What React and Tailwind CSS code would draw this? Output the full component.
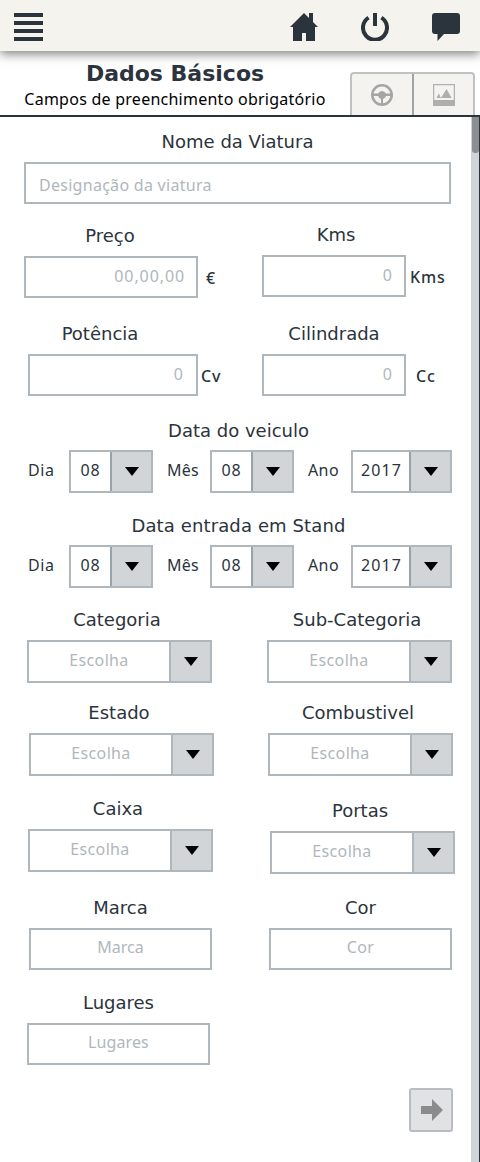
import React from "react";

const verdana = "font-['DejaVu_Sans',Verdana,sans-serif]";
const noto = "font-['Noto_Sans','Open_Sans',sans-serif]";

function Label({ children, className = "" }) {
  return (
    <div className={`${verdana} mb-[6px] h-7 whitespace-nowrap text-center text-[18px] leading-7 text-[#2b343c] ${className}`}>
      {children}
    </div>
  );
}

function Box({ children, className = "" }) {
  return (
    <div className={`${noto} flex h-[42px] items-center whitespace-nowrap border-2 border-[#b0b7bc] text-[16px] text-[#b0b7bc] ${className}`}>
      {children}
    </div>
  );
}

function Unit({ children, className = "" }) {
  return <span className={`${noto} self-end text-[16px] leading-6 font-medium tracking-[0.9px] text-[#2b343c] ${className}`}>{children}</span>;
}

function Arrow({ divider }) {
  return (
    <div className={`flex h-full w-[41px] shrink-0 items-center justify-center border-l-2 bg-[#d1d5d7] ${divider}`}>
      <svg width="14" height="9" viewBox="0 0 14 9" className="block"><path d="M0 0H14L7 9Z" fill="#000" /></svg>
    </div>
  );
}

function Select({ children, className = "", text = "text-[#b0b7bc] tracking-[0.35px]", divider = "border-[#b0b7bc]" }) {
  return (
    <div className={`${noto} flex h-[43px] whitespace-nowrap border-2 border-[#b0b7bc] text-[16px] ${className}`}>
      <span className={`flex flex-1 items-center justify-center pb-[3px] ${text}`}>{children}</span>
      <Arrow divider={divider} />
    </div>
  );
}

function Choice({ label, className = "" }) {
  return (
    <div className={`w-[185px] shrink-0 ${className}`}>
      <Label className="pr-[5px]">{label}</Label>
      <Select>Escolha</Select>
    </div>
  );
}

function DateRow({ label, className = "", tracking = "" }) {
  const small = `${noto} shrink-0 pb-[3px] text-[16px] text-[#2b343c]`;
  const divider = "border-[#99a2a8]";
  return (
    <div className={className}>
      <Label className={`w-[477px] pt-px ${tracking}`}>{label}</Label>
      <div className="flex items-center pl-7">
        <span className={`${small} w-[41px] tracking-[0.6px]`}>Dia</span>
        <Select className="w-[84px]" text="text-[#2b343c] tracking-[0.8px]" divider={divider}>08</Select>
        <span className={`${small} w-[57px] pl-[14px] tracking-[0.2px]`}>Mês</span>
        <Select className="w-[84px]" text="text-[#2b343c] tracking-[0.8px]" divider={divider}>08</Select>
        <span className={`${small} w-[57px] pl-[14px] tracking-[0.4px]`}>Ano</span>
        <Select className="w-[101px]" text="pl-px text-[#2b343c] tracking-[1.1px]" divider={divider}>2017</Select>
      </div>
    </div>
  );
}

export default function App() {
  return (
    <div className="flex h-[1162px] w-[480px] flex-col overflow-hidden bg-white">
      <header className="z-10 flex h-[51px] shrink-0 items-center bg-[#f5f3ed] pl-[14px] shadow-[0_3px_10px_rgba(0,0,0,0.5)]">
        <div className="mt-[3px] flex w-[29px] flex-col gap-1">
          <i className="h-1 bg-[#2b343c]" /><i className="h-1 bg-[#2b343c]" /><i className="h-1 bg-[#2b343c]" /><i className="h-1 bg-[#2b343c]" />
        </div>
        <svg className="mt-[3px] ml-[247px] block" width="28" height="28" viewBox="0 0 28 28" fill="#2b343c">
          <path d="M14 0L19 5V0H23V9L28 14H25V28H16V20H12V28H3V14H0Z" />
        </svg>
        <svg className="mt-[3px] ml-[43px] block" width="28" height="28" viewBox="0 0 28 28" fill="none" stroke="#2b343c" strokeWidth="4">
          <path d="M14 0V13" /><path d="M7.6 4.6A12 12 0 1 0 20.4 4.6" />
        </svg>
        <svg className="mt-[3px] ml-[43px] block" width="28" height="28" viewBox="0 0 28 28" fill="#2b343c">
          <path d="M3 0H25Q28 0 28 3V18Q28 21 25 21H12L5.500 28V21H3Q0 21 0 18V3Q0 0 3 0Z" />
        </svg>
      </header>

      <section className="flex h-[66px] shrink-0 items-end border-b-2 border-[#2b343c]">
        <div className="flex h-full w-[350px] flex-col items-center pt-[9px]">
          <h1 className={`${verdana} h-[27px] text-[22px] leading-7 font-bold text-[#2b343c]`}>Dados Básicos</h1>
          <p className={`${noto} h-6 whitespace-nowrap text-[16px] leading-6 tracking-[0.25px] text-black`}>Campos de preenchimento obrigatório</p>
        </div>
        <div className="flex h-[43px] w-[125px] rounded-t-[4px] border-2 border-b-0 border-[#bfc1c3] bg-[#f5f3ef]">
          <div className="flex w-[62px] items-start justify-center border-r-2 border-[#9ea4a9] pt-[10px]">
            <svg width="22" height="22" viewBox="0 0 22 22" className="block">
              <circle cx="11" cy="11" r="9.700" fill="none" stroke="#a5a5a3" strokeWidth="2.600" />
              <path d="M2 9.500H7Q8.500 7 11 7Q13.500 7 15 9.500H20V12H15Q14.500 14 12 15V20H10V15Q7.500 14 7 12H2Z" fill="#a5a5a3" />
            </svg>
          </div>
          <div className="flex flex-1 items-start justify-center pt-[10px]">
            <svg width="22" height="22" viewBox="0 0 22 22" className="block">
              <path d="M.6 .6H21.400V21.400H.6Z" fill="none" stroke="#b0b1b0" strokeWidth="1.300" />
              <path d="M0 16H22V22H0ZM3.500 14L5.800 9.500L8 14ZM8 14L13.500 5L18.700 14Z" fill="#adaead" />
            </svg>
          </div>
        </div>
      </section>

      <main className="flex flex-1">
        <div className="w-[471px] shrink-0 pt-[11px]">
          <div className="ml-6 w-[427px]">
            <Label>Nome da Viatura</Label>
            <Box className="pt-[3px] pl-[13px] tracking-[0.28px]">Designação da viatura</Box>
          </div>

          <div className="mt-[17px] flex pl-6">
            <div className="mt-px w-[174px]">
              <Label className="pr-[2px]">Preço</Label>
              <Box className="justify-end pr-[11px] pb-[3px] tracking-[0.9px]">00,00,00</Box>
            </div>
            <Unit className="w-16 pb-2 pl-[8px]">€</Unit>
            <div className="w-[144px]">
              <Label className="pl-1">Kms</Label>
              <Box className="justify-end pr-[12px] pb-[2px]">0</Box>
            </div>
            <Unit className="pb-[9px] pl-1">Kms</Unit>
          </div>

          <div className="mt-[22px] flex pl-7">
            <div className="w-[170px]">
              <Label className="pr-[26px]">Potência</Label>
              <Box className="justify-end pr-[13px] pb-[3px]">0</Box>
            </div>
            <Unit className="w-16 pb-2 pl-[3px]">Cv</Unit>
            <div className="w-[144px]">
              <Label>Cilindrada</Label>
              <Box className="justify-end pr-[12px] pb-[3px]">0</Box>
            </div>
            <Unit className="pb-2 pl-[10px]">Cc</Unit>
          </div>

          <DateRow className="mt-5" label="Data do veiculo" />
          <DateRow className="mt-[18px]" label="Data entrada em Stand" tracking="tracking-[0.12px]" />

          <div className="mt-[18px] flex gap-[55px] pl-[27px]">
            <Choice label="Categoria" /><Choice label="Sub-Categoria" />
          </div>
          <div className="mt-4 flex gap-[54px] pl-[29px]">
            <Choice label="Estado" /><Choice label="Combustivel" />
          </div>
          <div className="mt-[19px] flex gap-[57px] pl-7">
            <Choice label="Caixa" /><Choice label="Portas" className="mt-[2px]" />
          </div>
          <div className="mt-5 flex gap-[57px] pl-[29px]">
            <div className="w-[183px]"><Label>Marca</Label><Box className="justify-center pb-[4px]">Marca</Box></div>
            <div className="w-[183px]"><Label>Cor</Label><Box className="justify-center pb-[4px] tracking-[0.4px]">Cor</Box></div>
          </div>
          <div className="mt-[19px] ml-[27px] w-[183px]">
            <Label>Lugares</Label><Box className="justify-center pb-[4px] tracking-[0.1px]">Lugares</Box>
          </div>

          <button className="mt-[23px] ml-[409px] flex h-11 w-11 items-center justify-center rounded-[3px] border-2 border-[#b9bdc1] bg-[#e0e2e4] pl-px">
            <svg width="22" height="22" viewBox="0 0 22 22" className="block"><path d="M0 7H11V0L22 11L11 22V15H0Z" fill="#8a8c8b" /></svg>
          </button>
        </div>
        <div className="w-[9px] border-r border-[#2b343c] bg-[#d0d4d8] pl-px">
          <div className="h-9 rounded-b-[3px] bg-[#8d8e90]" />
        </div>
      </main>
    </div>
  );
}
